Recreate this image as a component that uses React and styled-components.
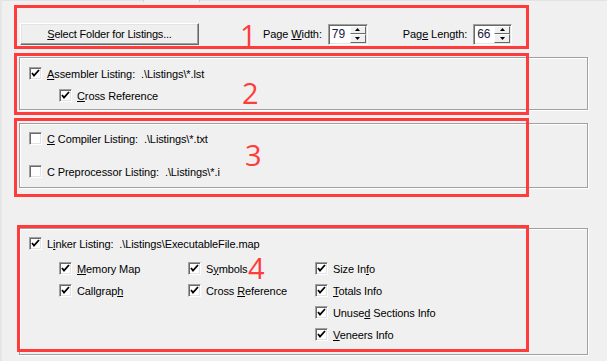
import React from "react";
import styled, { createGlobalStyle } from "styled-components";

const GlobalStyle = createGlobalStyle`
  html, body {
    margin: 0;
    padding: 0;
    background: #f0f0f0;
  }
  body {
    font-family: "Liberation Sans", Arial, sans-serif;
    font-size: 11px;
    letter-spacing: -0.1px;
    color: #000;
  }
`;

const Pane = styled.div`
  position: relative;
  width: 607px;
  height: 361px;
  box-sizing: border-box;
  background: #f0f0f0;
  border-left: 2px solid #e6e6e6;
  overflow: hidden;
  display: flex;
  flex-direction: column;
`;

const TabEdge = styled.div`
  display: flex;
  height: 2px;
`;

const TabLine = styled.div`
  height: 1px;
  background: #e3e3e3;
  width: ${(p) => (p.$w ? `${p.$w}px` : "auto")};
  flex: ${(p) => (p.$w ? "none" : "1")};
`;

const TabGap = styled.div`
  width: 57px;
  border-left: 1px solid #d0d0d0;
  border-right: 1px solid #d0d0d0;
  box-sizing: border-box;
`;

const Toolbar = styled.div`
  display: flex;
  align-items: center;
  margin: 21px 0 0 18px;
  height: 22px;
`;

const Button = styled.div`
  width: 179px;
  height: 22px;
  box-sizing: border-box;
  display: flex;
  align-items: center;
  justify-content: center;
  background: #efefef;
  border-top: 1px solid #fff;
  border-left: 1px solid #fff;
  border-right: 1px solid #696969;
  border-bottom: 1px solid #696969;
  box-shadow: inset -1px -1px 0 #a0a0a0, inset 1px 1px 0 #e3e3e3;
  letter-spacing: -0.2px;
`;

const Field = styled.label`
  display: flex;
  align-items: center;
  margin-left: ${(p) => p.$gap}px;
`;

const FieldLabel = styled.span`
  margin-right: 6px;
`;

const Spin = styled.div`
  display: flex;
  width: ${(p) => p.$w}px;
  height: 21px;
  box-sizing: border-box;
  background: #fff;
  border-top: 1px solid #a0a0a0;
  border-left: 1px solid #a0a0a0;
  border-right: 1px solid #fff;
  border-bottom: 1px solid #fff;
  box-shadow: inset 1px 1px 0 #696969, inset -1px -1px 0 #e3e3e3;
`;

const SpinValue = styled.span`
  flex: 1;
  padding: 2px 0 0 3px;
  font-size: 12px;
  color: #1a1a40;
`;

const SpinButtons = styled.div`
  width: 16px;
  display: flex;
  flex-direction: column;
  padding: 1px 1px 1px 0;
`;

const SpinBtn = styled.div`
  flex: 1;
  display: flex;
  align-items: center;
  justify-content: center;
  background: #f0f0f0;
  border-top: 1px solid #fff;
  border-left: 1px solid #fff;
  border-right: 1px solid #696969;
  border-bottom: 1px solid #696969;
  box-sizing: border-box;
`;

const Group = styled.div`
  position: relative;
  margin: ${(p) => p.$top}px 0 0 17px;
  width: 569px;
  height: ${(p) => p.$h}px;
  box-sizing: border-box;
  border: 1px solid #a0a0a0;
  box-shadow: 1px 1px 0 #fff, inset 1px 1px 0 #fff;
  padding: ${(p) => p.$pad || "9px 0 0 9px"};
  display: flex;
  flex-direction: column;
  gap: ${(p) => p.$gap}px;
`;

const CheckRow = styled.label`
  display: flex;
  align-items: center;
  height: 13px;
  margin-left: ${(p) => p.$indent || 0}px;
  white-space: pre;
`;

const Box = styled.span`
  width: 13px;
  height: 13px;
  box-sizing: border-box;
  background: #fff;
  border-top: 1px solid #a0a0a0;
  border-left: 1px solid #a0a0a0;
  border-right: 1px solid #fff;
  border-bottom: 1px solid #fff;
  box-shadow: inset 1px 1px 0 #696969, inset -1px -1px 0 #e3e3e3;
  margin-right: 5px;
  display: flex;
  align-items: center;
  justify-content: center;
  flex: none;
`;

const Sub = styled.div`
  display: grid;
  grid-template-columns: 129px 127px 1fr;
  grid-template-rows: repeat(4, 13px);
  grid-auto-flow: column;
  row-gap: ${(p) => p.$rowGap}px;
  margin: 12px 0 0 30px;
`;

const U = styled.span`
  text-decoration: underline;
  text-underline-offset: 1px;
`;

const Annot = styled.div`
  position: absolute;
  left: ${(p) => p.$x}px;
  top: ${(p) => p.$y}px;
  width: ${(p) => p.$w}px;
  height: ${(p) => p.$h}px;
  box-sizing: border-box;
  border: 3px solid #ff3b3b;
  pointer-events: none;
`;

const Num = styled.span`
  position: absolute;
  left: ${(p) => p.$x}px;
  top: ${(p) => p.$y}px;
  height: 22px;
  font-family: "Open Sans", "Liberation Sans", sans-serif;
  font-size: 29px;
  line-height: 22px;
  color: #ff3b3b;
`;

const Tick = () => (
  <svg width="9" height="9" viewBox="0 0 9 9">
    <path d="M1 4 L3 6.5 L8 1" stroke="#000" strokeWidth="1.8" fill="none" />
  </svg>
);

const Check = ({ on, indent, children }) => (
  <CheckRow $indent={indent}>
    <Box>{on && <Tick />}</Box>
    <span>{children}</span>
  </CheckRow>
);

const Arrow = ({ up }) => (
  <svg width="5" height="3" viewBox="0 0 5 3">
    <path d={up ? "M0 3 L2.5 0 L5 3 Z" : "M0 0 L2.5 3 L5 0 Z"} fill="#000" />
  </svg>
);

const SpinBox = ({ value, w }) => (
  <Spin $w={w}>
    <SpinValue>{value}</SpinValue>
    <SpinButtons>
      <SpinBtn>
        <Arrow up />
      </SpinBtn>
      <SpinBtn>
        <Arrow />
      </SpinBtn>
    </SpinButtons>
  </Spin>
);

const linkerOptions = [
  [<><U>M</U>emory Map</>, <>Callgrap<U>h</U></>, null, null],
  [<>S<U>y</U>mbols</>, <>Cross <U>R</U>eference</>, null, null],
  [
    <>Size In<U>f</U>o</>,
    <><U>T</U>otals Info</>,
    <>Unuse<U>d</U> Sections Info</>,
    <><U>V</U>eneers Info</>,
  ],
];

export default function App() {
  return (
    <>
      <GlobalStyle />
      <Pane>
        <TabEdge>
          <TabLine $w={141} />
          <TabGap />
          <TabLine />
        </TabEdge>

        <Toolbar>
          <Button>
            <span>
              <U>S</U>elect Folder for Listings...
            </span>
          </Button>
          <Field $gap={64}>
            <FieldLabel>
              Page <U>W</U>idth:
            </FieldLabel>
            <SpinBox value="79" w={40} />
          </Field>
          <Field $gap={35}>
            <FieldLabel>
              Pag<U>e</U> Length:
            </FieldLabel>
            <SpinBox value="66" w={39} />
          </Field>
        </Toolbar>

        <Group $top={12} $h={53} $gap={9}>
          <Check on>
            <U>A</U>ssembler Listing:  .\Listings\*.lst
          </Check>
          <Check on indent={30}>
            <U>C</U>ross Reference
          </Check>
        </Group>

        <Group $top={13} $h={65} $gap={20} $pad="8px 0 0 9px">
          <Check>
            <U>C</U> Compiler Listing:  .\Listings\*.txt
          </Check>
          <Check>C Preprocessor Listing:  .\Listings\*.i</Check>
        </Group>

        <Group $top={40} $h={127} $gap={0} $pad="8px 0 0 9px">
          <Check on>
            L<U>i</U>nker Listing:  .\Listings\ExecutableFile.map
          </Check>
          <Sub $rowGap={9}>
            {linkerOptions.flatMap((col, ci) =>
              col.map((label, ri) =>
                label ? (
                  <Check on key={`${ci}-${ri}`}>
                    {label}
                  </Check>
                ) : (
                  <span key={`${ci}-${ri}`} />
                )
              )
            )}
          </Sub>
        </Group>

        <Annot $x={12} $y={5} $w={515} $h={44} />
        <Num $x={238} $y={24}>1</Num>
        <Annot $x={12} $y={53} $w={515} $h={62} />
        <Num $x={240} $y={82}>2</Num>
        <Annot $x={12} $y={118} $w={515} $h={79} />
        <Num $x={243} $y={144}>3</Num>
        <Annot $x={15} $y={225} $w={512} $h={127} />
        <Num $x={246} $y={257}>4</Num>
      </Pane>
    </>
  );
}
